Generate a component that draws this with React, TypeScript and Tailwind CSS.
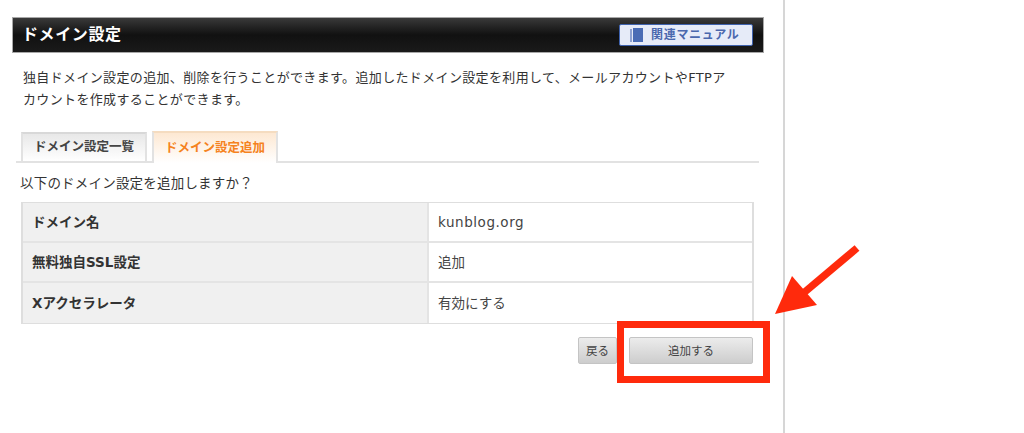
const FONT = "font-['DejaVu_Sans','Noto_Sans_CJK_JP',sans-serif]";

function Row({ label, value, last, big }: { label: string; value: string; last?: boolean; big?: boolean }) {
  return (
    <div className={`flex ${last ? "h-[40px]" : "h-[40px] border-b-2 border-[#e4e4e4]"}`}>
      <div className="w-[406px] shrink-0 bg-[#f0f0f0] border-r-2 border-[#e4e4e4] pl-[9px] pt-[1px] flex items-center text-[13.5px] font-bold text-[#333]">
        {label}
      </div>
      <div className={`flex-1 pl-[9px] pt-[1px] flex items-center text-[#444] ${big ? "text-[13.5px] tracking-[0.55px]" : "text-[13.5px]"}`}>{value}</div>
    </div>
  );
}

export default function App() {
  return (
    <div className={`relative w-[1024px] h-[433px] overflow-hidden bg-white ${FONT}`}>
      <div className="w-[785px] h-[433px] border-r-2 border-[#d6d6d6] pt-[17px]">
        <div className="ml-[12px] w-[752px] h-[36px] border border-[#a8a8a8] bg-gradient-to-b from-[#3a3a3a] via-[#111] to-[#1a1a1a] flex items-center justify-between pl-[9px] pr-[10px]">
          <span className="text-[16px] font-bold text-white tracking-[0.6px]">ドメイン設定</span>
          <div className="w-[134px] h-[22px] bg-[#e6ebf8] border border-[#3f62ad] rounded-[2px] flex items-center pl-[10px] gap-[8px]">
            <svg width="13" height="14" viewBox="0 0 13 14">
              <rect x="0" y="1" width="2" height="13" fill="#8ea2d2" />
              <rect x="3" y="0" width="10" height="14" fill="#4a6cb5" />
            </svg>
            <span className="text-[12px] font-bold text-[#4a68ae] tracking-[0.7px] leading-none">関連マニュアル</span>
          </div>
        </div>

        <p className="ml-[23px] mt-[14px] w-[705px] text-[13px] leading-[22px] text-[#333] tracking-[0.35px]">
          独自ドメイン設定の追加、削除を行うことができます。追加したドメイン設定を利用して、メールアカウントやFTPアカウントを作成することができます。
        </p>

        <div className="ml-[16px] mt-[20px] w-[743px] h-[32px] border-b-2 border-[#e2e2e2] flex items-end pl-[5px] gap-[5px]">
          <div className="w-[126px] h-[31px] -mb-[2px] border-2 border-[#e2e2e2] border-t-[#d8d8d8] bg-gradient-to-b from-[#e8e8e8] to-white flex items-center justify-center text-[12.5px] font-bold text-[#444]">
            ドメイン設定一覧
          </div>
          <div className="w-[126px] h-[32px] -mb-[2px] border-2 border-b-0 border-[#e2e2e2] border-t-[#f5dcc0] bg-gradient-to-b from-[#fde8d2] to-white flex items-center justify-center text-[12.5px] font-bold text-[#f58220]">
            ドメイン設定追加
          </div>
        </div>

        <p className="ml-[20px] mt-[11px] text-[13.5px] leading-[18px] text-[#333] tracking-[0.2px]">以下のドメイン設定を追加しますか？</p>

        <div className="ml-[21px] mt-[10px] w-[733px] h-[122px] border-x-2 border-y border-[#dedede]">
          <Row label="ドメイン名" value="kunblog.org" big />
          <Row label="無料独自SSL設定" value="追加" />
          <Row label="Xアクセラレータ" value="有効にする" last />
        </div>

        <div className="ml-[21px] mt-[13px] w-[733px] flex justify-end pr-[1px] gap-[12px]">
          <button className="w-[39px] h-[27px] pt-[2px] rounded-[2px] border border-[#c4c4c4] bg-gradient-to-b from-[#ececec] to-[#cdcdcd] text-[11.5px] text-[#444]">戻る</button>
          <button className="w-[124px] h-[27px] pt-[2px] rounded-[2px] border border-[#c4c4c4] bg-gradient-to-b from-[#ececec] to-[#cdcdcd] text-[11.5px] text-[#444]">追加する</button>
        </div>
      </div>

      <div className="absolute left-[617px] top-[321px] w-[153px] h-[62px] border-[7px] border-[#ff2a0c]" />
      <svg className="absolute left-[770px] top-[240px]" width="95" height="80" viewBox="770 240 95 80">
        <line x1="857" y1="248" x2="800" y2="296" stroke="#ff2a0c" strokeWidth="7.5" />
        <polygon points="775,314 792,276 817,305" fill="#ff2a0c" />
      </svg>
    </div>
  );
}
